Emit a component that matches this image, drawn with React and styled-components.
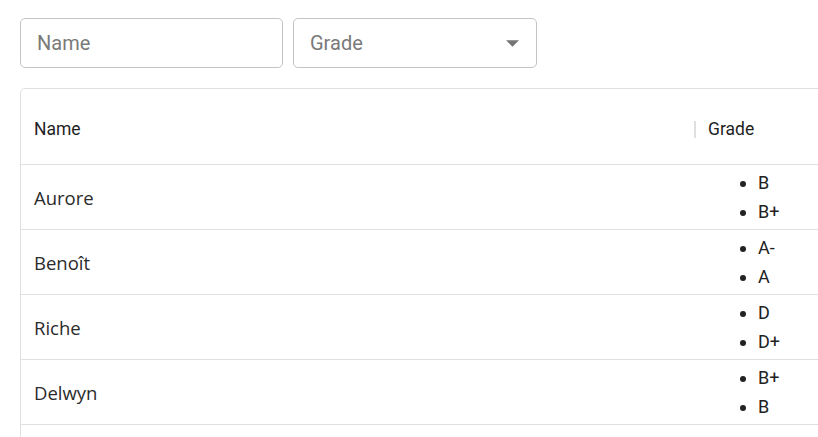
import React from "react";
import styled, { createGlobalStyle } from "styled-components";

const Global = createGlobalStyle`
  html, body { margin: 0; padding: 0; background: #fff; overflow: hidden; }
  body { font-family: Roboto, "Liberation Sans", sans-serif; color: rgba(0,0,0,0.87); }
`;

const Page = styled.div`
  padding: 18px 0 0 20px;
  display: flex;
  flex-direction: column;
  gap: 20px;
  width: 1000px;
`;

const Filters = styled.div`
  display: flex;
  gap: 10px;
`;

const Field = styled.div`
  box-sizing: border-box;
  width: ${(p) => p.$w}px;
  height: 50px;
  border: 1px solid #c4c4c4;
  border-radius: 5px;
  display: flex;
  align-items: center;
  justify-content: space-between;
  padding: 0 17px 0 16px;
  font-size: 20px;
  color: #7a7a7a;
`;

const Arrow = styled.svg`
  width: 13px;
  height: 7px;
  fill: #757575;
`;

const Grid = styled.div`
  box-sizing: border-box;
  width: 900px;
  border: 1px solid #e0e0e0;
  border-radius: 5px;
  display: flex;
  flex-direction: column;
`;

const Row = styled.div`
  display: grid;
  grid-template-columns: 674px 1fr;
  height: ${(p) => p.$h}px;
  border-bottom: 1px solid #e0e0e0;
  box-sizing: border-box;
`;

const HeadCell = styled.div`
  position: relative;
  display: flex;
  align-items: center;
  padding: 4px 13px 0;
  font-size: 17.5px;
  font-weight: 400;
  color: #1f1f1f;
`;

const Separator = styled.span`
  position: absolute;
  left: -1px;
  top: 32px;
  width: 2px;
  height: 17px;
  background: #e0e0e0;
`;

const NameCell = styled.div`
  display: flex;
  align-items: center;
  padding: 0 13px;
  font-size: 18.5px;
  color: #2b2b2b;
  font-family: "Open Sans", Roboto, sans-serif;
`;

const GradeCell = styled.div`
  display: flex;
  align-items: center;
  padding: 0 13px;
`;

const List = styled.ul`
  margin: 0;
  padding: 0 0 0 50px;
  font-size: 18px;
  line-height: 29px;
  color: #222;
`;

const rows = [
  ["Aurore", ["B", "B+"]],
  ["Benoît", ["A-", "A"]],
  ["Riche", ["D", "D+"]],
  ["Delwyn", ["B+", "B"]],
  ["", []],
];

export default function App() {
  return (
    <>
      <Global />
      <Page>
        <Filters>
          <Field $w={263}>Name</Field>
          <Field $w={244}>
            Grade
            <Arrow viewBox="0 0 10 5">
              <path d="M0 0l5 5 5-5z" />
            </Arrow>
          </Field>
        </Filters>
        <Grid>
          <Row $h={76}>
            <HeadCell>Name</HeadCell>
            <HeadCell>
              <Separator />
              Grade
            </HeadCell>
          </Row>
          {rows.map(([n, g], i) => (
            <Row key={i} $h={65}>
              <NameCell>{n}</NameCell>
              <GradeCell>
                <List>
                  {g.map((x) => (
                    <li key={x}>{x}</li>
                  ))}
                </List>
              </GradeCell>
            </Row>
          ))}
        </Grid>
      </Page>
    </>
  );
}
